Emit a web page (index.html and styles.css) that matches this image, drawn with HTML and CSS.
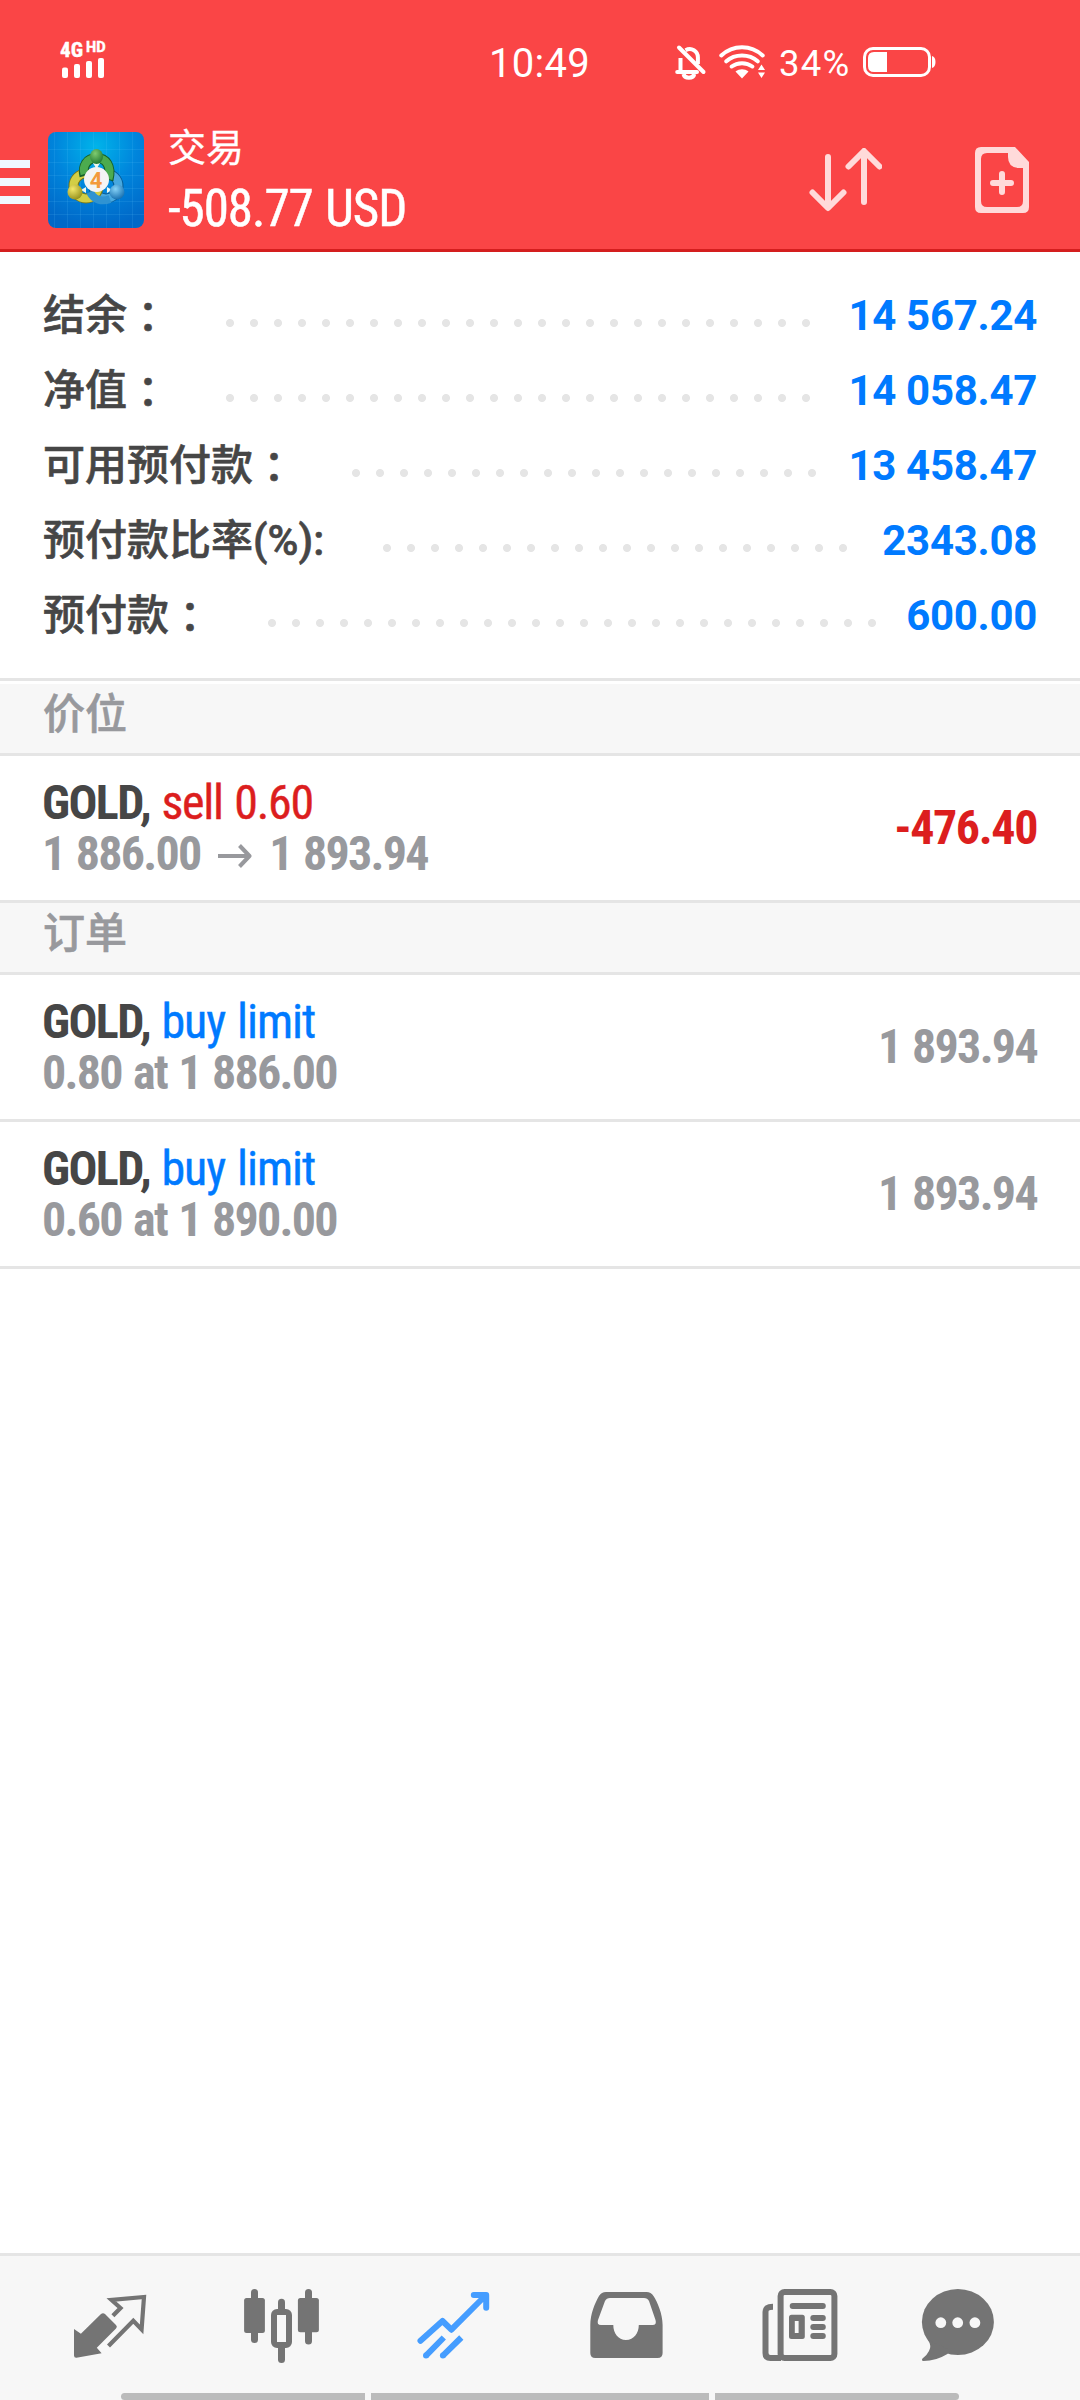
FILE: index.html
```html
<!DOCTYPE html>
<html lang="zh-CN">
<head>
<meta charset="utf-8">
<title>交易</title>
<link rel="stylesheet" href="styles.css">
</head>
<body>
<header class="header">
  <div class="status">
    <div class="signal">
      <div class="net"><span>4G</span><span class="hd">HD</span></div>
      <svg width="42" height="20" viewBox="0 0 42 20" fill="#fff"><rect x="0" y="9.500" width="6" height="10.500" rx="2"/><rect x="12" y="6" width="6" height="14" rx="2"/><rect x="24" y="3" width="6" height="17" rx="2"/><rect x="36" y="0" width="6" height="20" rx="2"/></svg>
    </div>
    <div class="time">10:49</div>
    <div class="tray">
      <svg class="bell" width="34" height="38" viewBox="0 0 34 38" fill="none" stroke="#fff" stroke-width="4"><path d="M6.500 27V14M11.500 6.200C17.500 3 23.900 7 23.900 13.500V20" /><path d="M3.200 28H23" stroke-linecap="round"/><path d="M9.500 30c1 5 9.800 5 10.800 0"/><path d="M5 3.500L29.500 28" stroke-linecap="round"/></svg>
      <svg class="wifi" width="50" height="38" viewBox="0 0 50 38" fill="none" stroke="#fff" stroke-width="4" stroke-linecap="round"><path d="M3.300 11.500C15 .5 33 .5 44.700 11.500M8.300 17.300C17 9.600 31 9.600 39.700 17.300M13.700 22.500C19.500 18 28.500 18 34.300 22.500"/><path d="M17.500 27.500C21.500 24.500 26.500 24.500 30.500 27.500L24 34.500Z" fill="#fff" stroke="none"/><path d="M43.500 20.500L47 26H40ZM40 28.500H47L43.500 34Z" fill="#fff" stroke="none"/></svg>
      <span class="pct">34%</span>
      <svg width="74" height="30" viewBox="0 0 74 30"><rect x="1.500" y="1.500" width="65" height="27" rx="8.500" fill="none" stroke="#fff" stroke-width="3"/><path d="M24 5V25H11Q5 25 5 19V11Q5 5 11 5Z" fill="#fff"/><path d="M69 9Q72.500 10 72.500 15T69 21Z" fill="#fff"/></svg>
    </div>
  </div>
  <div class="toolbar">
    <div class="menu"><i></i><i></i><i></i></div>
    <svg class="logo" width="96" height="96" viewBox="0 0 96 96">
      <defs>
        <radialGradient id="sky" cx=".5" cy=".15" r=".85"><stop offset="0" stop-color="#00b4ea"/><stop offset=".5" stop-color="#0085dc"/><stop offset="1" stop-color="#0068c8"/></radialGradient>
        <radialGradient id="green" cx=".4" cy=".3" r=".8"><stop offset="0" stop-color="#7fcb70"/><stop offset="1" stop-color="#18702a"/></radialGradient>
        <radialGradient id="yellow" cx=".35" cy=".3" r=".8"><stop offset="0" stop-color="#f3e86a"/><stop offset="1" stop-color="#8f8a17"/></radialGradient>
        <radialGradient id="blue" cx=".4" cy=".3" r=".8"><stop offset="0" stop-color="#86d2f7"/><stop offset="1" stop-color="#0a64a8"/></radialGradient>
      </defs>
      <rect width="96" height="96" rx="8" fill="url(#sky)"/>
      <path d="M6.500 0V96M19.500 0V96M32.500 0V96M45.500 0V96M58.500 0V96M71.500 0V96M84.500 0V96M0 17.500H96M0 30.500H96M0 43.500H96M0 56.500H96M0 69.500H96M0 82.500H96" stroke="#6cd0ff" stroke-opacity=".13"/>
      <circle cx="58" cy="54" r="12.500" fill="none" stroke="#075a92" stroke-width="10"/>
      <circle cx="58" cy="54" r="12.500" fill="none" stroke="#48a8df" stroke-width="8"/>
      <circle cx="38" cy="54" r="12.500" fill="none" stroke="#777718" stroke-width="10"/>
      <circle cx="38" cy="54" r="12.500" fill="none" stroke="#d2ce45" stroke-width="8"/>
      <path d="M36.500 44C34 34 39 26 48.500 26S64 34 60.500 48" fill="none" stroke="#14602a" stroke-width="10"/>
      <path d="M36.500 42C34 34 39 26 48.500 26S64 34 60.500 47" fill="none" stroke="#4cab4e" stroke-width="8"/>
      <path d="M42 60C46 68 54 70 62 67" fill="none" stroke="#2f93d2" stroke-width="8"/>
      <path d="M45 31l3.500 6 3.500-6zM33 58l5-3v6zM64 58l-5-3v6z" fill="#eef8f0"/>
      <ellipse cx="48.500" cy="24.500" rx="6.500" ry="7.500" fill="url(#green)"/>
      <circle cx="27" cy="60" r="7.500" fill="url(#yellow)"/>
      <circle cx="69" cy="60" r="7.500" fill="url(#blue)"/>
      <circle cx="48.500" cy="47.500" r="12.500" fill="#f4f4f4"/>
      <text x="48" y="55.500" text-anchor="middle" class="four">4</text>
    </svg>
    <div class="titles"><div class="title">交易</div><div class="total cond">-508.77 USD</div></div>
    <svg class="sort" width="74" height="66" viewBox="0 0 74 66" fill="none" stroke="#ffdada" stroke-width="6" stroke-linecap="round" stroke-linejoin="round"><path d="M20 9V59M4.500 44.500L20 60 35.500 44.500M56 54V5M40.500 18.500L56 3 71.500 18.500"/></svg>
    <svg class="doc" width="54" height="66" viewBox="0 0 54 66" fill="#ffdada"><path fill-rule="evenodd" d="M6 0H40L54 15V60Q54 66 48 66H6Q0 66 0 60V6Q0 0 6 0ZM12 6Q6 6 6 12V54Q6 60 12 60H42Q48 60 48 54V21H43Q33 20 33 10V6Z"/><path d="M27 27V45M18 36H36" stroke="#ffdada" stroke-width="6" stroke-linecap="round"/></svg>
  </div>
</header>

<section class="summary">
  <div class="line"><span class="label">结余<span class="colon" lang="zh-TW">：</span></span><i class="dots d1"></i><span class="val">14 567.24</span></div>
  <div class="line"><span class="label">净值<span class="colon" lang="zh-TW">：</span></span><i class="dots d1"></i><span class="val">14 058.47</span></div>
  <div class="line"><span class="label">可用预付款<span class="colon" lang="zh-TW">：</span></span><i class="dots d3"></i><span class="val">13 458.47</span></div>
  <div class="line"><span class="label">预付款比率(%):</span><i class="dots d4"></i><span class="val">2343.08</span></div>
  <div class="line"><span class="label">预付款<span class="colon" lang="zh-TW">：</span></span><i class="dots d5"></i><span class="val">600.00</span></div>
</section>

<h2 class="section first">价位</h2>
<div class="item">
  <div class="info cond"><div><b>GOLD,</b> <span class="sell">sell 0.60</span></div><div class="price">1 886.00 <svg width="34" height="26" viewBox="0 0 34 26" fill="none" stroke="#98999d" stroke-width="4"><path d="M0 13H31M21.500 2.500L31.500 13 21.500 23.500" stroke-linejoin="round"/></svg> 1 893.94</div></div>
  <div class="amount loss cond">-476.40</div>
</div>
<h2 class="section">订单</h2>
<div class="item">
  <div class="info cond"><div><b>GOLD,</b> <span class="buy">buy limit</span></div><div class="price">0.80 at 1 886.00</div></div>
  <div class="amount cond">1 893.94</div>
</div>
<div class="item">
  <div class="info cond"><div><b>GOLD,</b> <span class="buy">buy limit</span></div><div class="price">0.60 at 1 890.00</div></div>
  <div class="amount cond">1 893.94</div>
</div>

<footer class="footer">
  <nav class="nav">
    <svg width="90" height="90" viewBox="0 0 90 90"><path d="M47.900 35.700L55.500 28 46.500 20 79 17 76.600 49.500 68.300 40.800 43.500 66" fill="none" stroke="#747474" stroke-width="4.200"/><path d="M9 49L15.900 53.700 36 34Q38 32.300 40 34L51 45Q52.800 46.700 51 48.500L31.800 67.700 36.600 73.300 11.500 77.800Q9 78 9 75.500Z" fill="#747474"/></svg>
    <svg width="90" height="90" viewBox="0 0 90 90" fill="#747474"><rect x="7.100" y="18" width="20.800" height="35" rx="2.500"/><rect x="14" y="9" width="7" height="54" rx="3.500"/><rect x="60.900" y="18" width="21" height="34.300" rx="2.500"/><rect x="68" y="9" width="7" height="55.500" rx="3.500"/><rect x="41" y="18.700" width="7" height="16" rx="3.500"/><rect x="41" y="62" width="7" height="21" rx="3.500"/><rect x="37" y="32" width="15" height="33" rx="3" fill="#f7f7f7" stroke="#747474" stroke-width="6"/></svg>
    <svg width="90" height="90" viewBox="0 0 90 90" fill="none" stroke="#459dff" stroke-width="6"><path d="M11.500 60.700L33.500 41 42.400 49.700 76 16M64.800 15H77.200V27.700" stroke-linecap="round" stroke-linejoin="round"/><path d="M17 75.700L34.800 57.500M33.900 75.700L52.300 57.500"/><g fill="#459dff" stroke="none"><circle cx="17" cy="75.500" r="3"/><circle cx="33.900" cy="75.500" r="3"/></g></svg>
    <svg width="90" height="90" viewBox="0 0 90 90" fill="#747474"><path fill-rule="evenodd" d="M9.300 45C9.300 34 14 23 18 16Q20.500 12 25 12H65.500Q70 12 72.500 16C76.500 22 81.600 34 81.600 45V73Q81.600 78 76.600 78H14.300Q9.300 78 9.300 73ZM29 18Q25.500 18 24 21L17 40Q15.500 45 20 45H32.300C32.300 53 37 60 45 60S57.800 53 57.800 45H71.500Q76 45 74.500 40L68 21Q66.500 18 63 18Z"/></svg>
    <svg width="90" height="90" viewBox="0 0 90 90" fill="none" stroke="#747474" stroke-width="6"><rect x="27.600" y="12" width="53.800" height="66" rx="4"/><path d="M20 26.800C15 26.800 12.500 28 12.500 32V73Q12.500 78 17.500 78H28"/><g fill="#747474" stroke="none"><rect x="36.700" y="23" width="36.100" height="6" rx="3"/><path fill-rule="evenodd" d="M38.500 34.700H49.300Q51.800 34.700 51.800 37.200V56.500Q51.800 59 49.300 59H38.500Q36 59 36 56.500V37.200Q36 34.700 38.500 34.700ZM41.800 41V53H45.600V41Z"/><rect x="57.300" y="35" width="15.500" height="6" rx="3"/><rect x="57.300" y="44" width="15.500" height="6" rx="3"/><rect x="57.300" y="53" width="15.500" height="6" rx="3"/></g></svg>
    <svg width="90" height="90" viewBox="0 0 90 90" fill="#747474"><ellipse cx="45.900" cy="42" rx="36" ry="33"/><path d="M16 60Q20 66 17 71 14.500 76 10.500 78.500 9 80.500 11.500 81 24 81 35.400 74L38 70Z"/><g fill="#f7f7f7"><circle cx="28.800" cy="42.700" r="5.400"/><circle cx="45.700" cy="42.700" r="5.400"/><circle cx="62.900" cy="42.700" r="5.400"/></g></svg>
  </nav>
  <div class="gesture"><i></i><i></i><i></i></div>
</footer>
</body>
</html>
```
FILE: styles.css
```css
* { box-sizing: border-box; }
body {
  margin: 0;
  width: 1080px;
  height: 2400px;
  display: flex;
  flex-direction: column;
  background: #fff;
  color: #464646;
  font-family: Roboto, "Noto Sans CJK SC", sans-serif;
  overflow: hidden;
}
svg { display: block; flex: none; }
.cond { font-family: "Roboto Condensed", Roboto, "Noto Sans CJK SC", sans-serif; font-stretch: 75%; }

.header { height: 252px; background: #fa4546; border-bottom: 3px solid #d41e1e; color: #fff; flex: none; }
.status { height: 120px; display: grid; grid-template-columns: 489px 185px 1fr; align-items: start; }
.signal { padding: 41px 0 0 60px; }
.signal svg { margin-left: 2px; }
.net { display: flex; align-items: flex-start; gap: 3px; height: 16.500px; font: 800 21px/19px "Roboto Condensed", Roboto, sans-serif; -webkit-text-stroke: .3px; }
.hd { font: 800 14.500px/13px Roboto, sans-serif; }
.time { font-size: 40px; line-height: 48px; padding-top: 40px; letter-spacing: .3px; }
.tray { display: flex; padding-top: 44px; }
.bell { margin-right: 10px; }
.pct { font-size: 36.500px; line-height: 40px; margin-left: 11px; width: 85px; letter-spacing: 1.200px; }
.tray svg:last-child { margin: 3px 0 0 -1px; }

.toolbar { display: flex; height: 129px; }
.menu { width: 30px; padding-top: 40px; display: grid; gap: 10px; align-content: start; }
.menu i { height: 8px; background: #f0f8ff; }
.logo { margin: 12px 0 0 18px; }
.four { font: 700 22px Roboto, sans-serif; fill: #f39a3c; }
.titles { margin-left: 24px; width: 640px; padding-top: 4px; }
.title { font-size: 38px; line-height: 48px; -webkit-text-stroke: .3px; }
.total { font-size: 51px; line-height: 60px; white-space: nowrap; margin-top: 7px; letter-spacing: -1.050px; word-spacing: 2px; -webkit-text-stroke: .5px; }
.sort { margin-top: 28px; }
.doc { margin: 27px 0 0 93px; }

.summary { height: 426px; padding: 26px 43px 0 43px; flex: none; }
.line { display: flex; height: 75px; line-height: 75px; font-size: 42px; font-weight: 500; }
.label { white-space: nowrap; height: 75px; -webkit-text-stroke: .6px; }
.colon { font-family: "Noto Sans CJK TC", sans-serif; line-height: 0; position: relative; top: 3px; }
.val { margin-left: auto; color: #007aff; font-weight: 700; white-space: pre; letter-spacing: -.3px; }
.dots { height: 8px; margin-top: 41px; margin-left: 57px; background: radial-gradient(circle at 4px 4px, #e5e5e5 3.600px, transparent 4.400px) 0 0 / 24px 8px; }
.d1 { width: 584px; }
.d3 { width: 464px; }
.d4 { width: 464px; margin-left: 59px; }
.d5 { width: 608px; }

.section { margin: 0; height: 72px; flex: none; padding-left: 43px; background: #f7f7f7; border-bottom: 3px solid #e5e5e5; color: #98999d; font-size: 42px; font-weight: 500; line-height: 61px; -webkit-text-stroke: .6px; }
.first { border-top: 3px solid #e5e5e5; height: 78px; box-shadow: inset 0 3px #fff; line-height: 68px; }
.item { height: 147px; flex: none; border-bottom: 3px solid #e5e5e5; padding: 21px 43px 0; display: flex; justify-content: space-between; font-size: 48px; line-height: 51px; letter-spacing: -1.700px; word-spacing: 2px; }
.info { margin-left: -1px; }
.info b { font-weight: 700; letter-spacing: -1.600px; }
.sell, .buy { -webkit-text-stroke: .4px; }
.sell { color: #dc1e1e; letter-spacing: -1.300px; }
.buy { color: #007aff; letter-spacing: -1.050px; }
.price { display: flex; white-space: pre; color: #98999d; font-weight: 700; letter-spacing: -1.750px; }
.price svg { margin: 15px 6px 0; }
.amount { color: #98999d; font-weight: 700; padding-top: 25px; }
.loss { color: #dc1e1e; letter-spacing: -1.400px; }

.footer { margin-top: auto; height: 147px; background: #f7f7f7; border-top: 3px solid #e5e5e5; display: flex; flex-direction: column; justify-content: space-between; flex: none; }
.nav { display: grid; grid-template-columns: repeat(5, 172px) 146px; padding: 24px 0 0 24px; justify-items: center; }
.gesture { display: grid; grid-template-columns: 244px 338px 244px; gap: 6px; height: 7px; margin-left: 121px; }
.gesture i { background: #bbb; }
.gesture i:first-child { border-radius: 4px 0 0 4px; }
.gesture i:last-child { border-radius: 0 4px 4px 0; }
```
